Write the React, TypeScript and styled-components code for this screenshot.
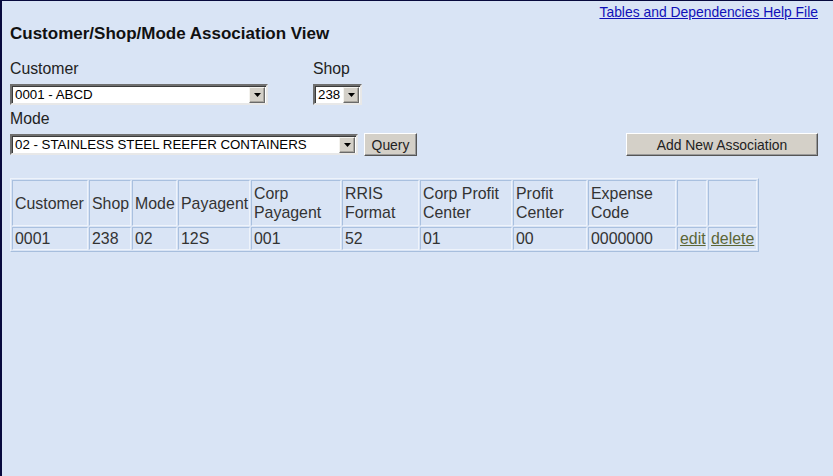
import React from "react";
import styled, { createGlobalStyle } from "styled-components";

const Global = createGlobalStyle`
  html, body { margin: 0; padding: 0; background: #d9e4f5; }
  body { font-family: "Liberation Sans", Arial, sans-serif; }
  * { box-sizing: border-box; }
`;

const Page = styled.div`
  width: 833px;
  height: 476px;
  background: #d9e4f5;
  border-left: 2px solid #07093d;
  border-top: 1px solid #07093d;
  padding: 2px 15px 0 8px;
  color: #222;
  overflow: hidden;
`;

const TopBar = styled.div`
  display: flex;
  justify-content: flex-end;
  height: 18px;
`;

const HelpLink = styled.a`
  font-size: 13.9px;
  line-height: 18px;
  color: #1010b8;
  text-decoration: underline;
  cursor: pointer;
`;

const Title = styled.h1`
  margin: 2px 0 0 0;
  font-size: 17px;
  line-height: 22px;
  font-weight: bold;
  color: #111;
`;

const FieldRow = styled.div<{ $top: number }>`
  display: flex;
  align-items: flex-end;
  margin-top: ${(p) => p.$top}px;
`;

const Field = styled.div<{ $w?: number }>`
  display: flex;
  flex-direction: column;
  width: ${(p) => (p.$w ? `${p.$w}px` : "auto")};
`;

const Label = styled.label<{ $mb: number }>`
  font-size: 15.8px;
  line-height: 20px;
  color: #222;
  margin-bottom: ${(p) => p.$mb}px;
`;

const SelectBox = styled.div<{ $w: number; $h: number }>`
  width: ${(p) => p.$w}px;
  height: ${(p) => p.$h}px;
  display: flex;
  align-items: center;
  background: #fff;
  border: 2px solid;
  border-color: #6f6f6f #e8e8e8 #e8e8e8 #6f6f6f;
  box-shadow: inset 1px 1px 0 #3a3a3a;
  padding: 0 1px 0 2px;
`;

const SelectValue = styled.span`
  flex: 1;
  font-size: 13.3px;
  line-height: 16px;
  color: #000;
  white-space: nowrap;
  overflow: hidden;
  padding-left: 1px;
`;

const DropButton = styled.span`
  width: 16px;
  height: 16px;
  background: #d4d0c8;
  border: 1px solid;
  border-color: #f4f3ef #6a6a6a #6a6a6a #f4f3ef;
  box-shadow: inset -1px -1px 0 #a8a59e;
  display: flex;
  align-items: center;
  justify-content: center;
`;

const ActionRow = styled.div`
  display: flex;
  align-items: center;
  margin-top: 4px;
`;

const Button = styled.button<{ $w: number; $ml?: number }>`
  width: ${(p) => p.$w}px;
  height: 23px;
  margin-left: ${(p) => (p.$ml !== undefined ? `${p.$ml}px` : "auto")};
  background: #d4d0c8;
  border: 1px solid;
  border-color: #ffffff #555 #555 #ffffff;
  box-shadow: inset -1px -1px 0 #9a9a9a;
  font-family: "Liberation Sans", Arial, sans-serif;
  font-size: 13.9px;
  color: #222;
  padding: 0;
  cursor: pointer;
`;

const Table = styled.table`
  margin-top: 22px;
  width: 749px;
  table-layout: fixed;
  border-collapse: separate;
  border-spacing: 1px;
  border: 1px solid;
  border-color: #eef3fb #a7bedd #a7bedd #eef3fb;
  font-size: 15.9px;
  color: #333;
`;

const Th = styled.th<{ $w: number }>`
  width: ${(p) => p.$w}px;
  font-weight: normal;
  text-align: left;
  vertical-align: middle;
  padding: 3px 2px;
  line-height: 19px;
  border: 1px solid;
  border-color: #a9c0df #eef3fb #eef3fb #a9c0df;
`;

const Td = styled.td`
  padding: 1px 2px;
  line-height: 19px;
  white-space: nowrap;
  border: 1px solid;
  border-color: #a9c0df #eef3fb #eef3fb #a9c0df;
`;

const RowLink = styled.a`
  color: #5c6636;
  text-decoration: underline;
  cursor: pointer;
`;

function Arrow() {
  return (
    <svg width="7" height="4" viewBox="0 0 7 4">
      <path d="M0 0h7L3.5 4z" fill="#000" />
    </svg>
  );
}

function Select({ w, h, value }: { w: number; h: number; value: string }) {
  return (
    <SelectBox $w={w} $h={h}>
      <SelectValue>{value}</SelectValue>
      <DropButton>
        <Arrow />
      </DropButton>
    </SelectBox>
  );
}

const columns: { label: React.ReactNode; w: number }[] = [
  { label: "Customer", w: 76 },
  { label: "Shop", w: 42 },
  { label: "Mode", w: 45 },
  { label: "Payagent", w: 72 },
  { label: <>Corp<br />Payagent</>, w: 90 },
  { label: <>RRIS<br />Format</>, w: 77 },
  { label: <>Corp Profit<br />Center</>, w: 92 },
  { label: <>Profit<br />Center</>, w: 74 },
  { label: <>Expense<br />Code</>, w: 88 },
  { label: "", w: 30 },
  { label: "", w: 49 },
];

const rows = [
  ["0001", "238", "02", "12S", "001", "52", "01", "00", "0000000"],
];

export default function App() {
  return (
    <>
      <Global />
      <Page>
        <TopBar>
          <HelpLink>Tables and Dependencies Help File</HelpLink>
        </TopBar>
        <Title>Customer/Shop/Mode Association View</Title>
        <FieldRow $top={14}>
          <Field $w={303}>
            <Label $mb={5}>Customer</Label>
            <Select w={258} h={21} value="0001 - ABCD" />
          </Field>
          <Field>
            <Label $mb={5}>Shop</Label>
            <Select w={49} h={21} value="238" />
          </Field>
        </FieldRow>
        <FieldRow $top={4}>
          <Field>
            <Label $mb={0}>Mode</Label>
          </Field>
        </FieldRow>
        <ActionRow>
          <Select w={348} h={21} value="02 - STAINLESS STEEL REEFER CONTAINERS" />
          <Button $w={53} $ml={6}>Query</Button>
          <Button $w={192}>Add New Association</Button>
        </ActionRow>
        <Table>
          <thead>
            <tr>
              {columns.map((c, i) => (
                <Th key={i} $w={c.w}>{c.label}</Th>
              ))}
            </tr>
          </thead>
          <tbody>
            {rows.map((r, i) => (
              <tr key={i}>
                {r.map((v, j) => (
                  <Td key={j}>{v}</Td>
                ))}
                <Td><RowLink>edit</RowLink></Td>
                <Td><RowLink>delete</RowLink></Td>
              </tr>
            ))}
          </tbody>
        </Table>
      </Page>
    </>
  );
}
